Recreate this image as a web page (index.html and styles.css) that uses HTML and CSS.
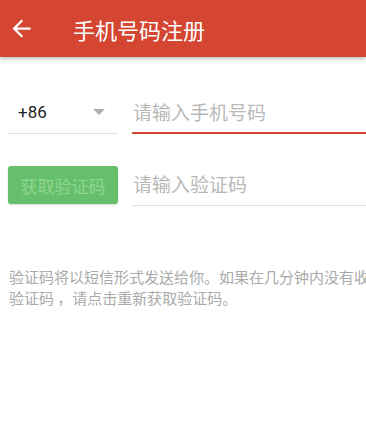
FILE: index.html
```html
<!DOCTYPE html>
<html lang="zh-CN">
<head>
<meta charset="utf-8">
<link rel="stylesheet" href="styles.css">
</head>
<body>
<header class="appbar">
  <svg class="back" viewBox="0 0 24 24" width="27" height="27"><path fill="#fff" d="M20 11H7.83l5.59-5.59L12 4l-8 8 8 8 1.41-1.41L7.83 13H20v-2z"/></svg>
  <h1 class="title">手机号码注册</h1>
</header>
<main class="form">
  <div class="row row-phone">
    <div class="country">
      <span class="code">+86</span>
      <span class="caret"></span>
    </div>
    <div class="field field-active"><span class="ph">请输入手机号码</span></div>
  </div>
  <div class="row row-code">
    <button class="getcode">获取验证码</button>
    <div class="field"><span class="ph">请输入验证码</span></div>
  </div>
  <div class="help">
    <p class="line">验证码将以短信形式发送给你。如果在几分钟内没有收到</p>
    <p class="line">验证码 ，请点击重新获取验证码。</p>
  </div>
</main>
</body>
</html>
```
FILE: styles.css
```css
* { box-sizing: border-box; }
html, body { margin: 0; padding: 0; background: #fff; }
body {
  width: 366px;
  height: 432px;
  overflow: hidden;
  font-family: "Noto Sans CJK SC", Roboto, sans-serif;
}
.appbar {
  height: 57px;
  background: #d44532;
  display: flex;
  align-items: center;
  box-shadow: 0 2px 4px rgba(0,0,0,0.25);
  position: relative;
}
.back { margin-left: 8px; flex: none; }
.title {
  margin: 0 0 0 38px;
  font-size: 22px;
  font-weight: 400;
  color: #fff;
  line-height: 1;
}
.form { padding-left: 8px; }
.row { display: flex; height: 44px; }
.row-phone { margin-top: 33px; }
.row-code { margin-top: 28px; }
.country {
  width: 110px;
  display: flex;
  align-items: center;
  justify-content: space-between;
  border-bottom: 1px solid #e0e0e0;
  padding: 0 13px 0 10px;
}
.code { font-family: Roboto, sans-serif; font-size: 17px; color: #222; }
.caret {
  width: 0; height: 0;
  border-left: 6px solid transparent;
  border-right: 6px solid transparent;
  border-top: 6px solid #b0b0b0;
  margin-top: 1px;
}
.field {
  flex: 1;
  margin-left: 14px;
  display: flex;
  align-items: center;
  border-bottom: 1px solid #e0e0e0;
  padding-left: 1px;
}
.field-active { border-bottom: 2px solid #d44532; }
.ph { font-size: 19px; color: #b8b8b8; }
.getcode {
  width: 110px;
  height: 38px;
  margin-top: 4px;
  border: none;
  border-radius: 3px;
  background: #66bf6b;
  color: #8fd593;
  font-family: "Noto Sans CJK SC", sans-serif;
  font-size: 17px;
  padding: 0;
  box-shadow: 0 1px 2px rgba(0,0,0,0.15);
}
.help { margin-top: 60px; width: 358px; overflow: hidden; }
.line {
  margin: 0;
  font-size: 15px;
  line-height: 21px;
  color: #aaa;
  white-space: nowrap;
  padding-left: 1px;
}
```
